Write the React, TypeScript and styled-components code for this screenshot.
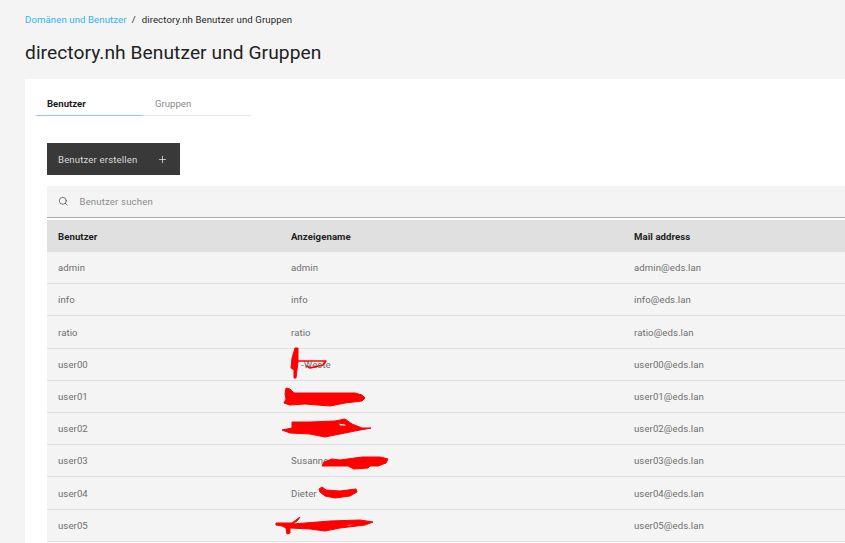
import React from 'react';
import styled, { createGlobalStyle } from 'styled-components';
import { Search, Plus } from 'lucide-react';

const GlobalStyle = createGlobalStyle`
  html, body {
    margin: 0;
    height: 100%;
    overflow: hidden;
    background: #f4f4f4;
    font-family: Roboto, "Liberation Sans", sans-serif;
  }
`;

const Page = styled.div`
  padding: 12px 0 0 25px;
  height: 543px;
  box-sizing: border-box;
  overflow: hidden;
`;

const Breadcrumb = styled.nav`
  display: flex;
  align-items: center;
  height: 14px;
  font-size: 9.6px;
  letter-spacing: 0.1px;
  color: #262626;
`;

const CrumbLink = styled.a`
  color: #2db5ee;
`;

const CrumbSep = styled.span`
  margin: 0 6px 0 5px;
`;

const Title = styled.h1`
  margin: 13px 0 13px;
  height: 27px;
  font-size: 19.2px;
  line-height: 27px;
  font-weight: 400;
  letter-spacing: 0.06px;
  color: #222;
`;

const Card = styled.main`
  background: #fff;
  padding: 11px 0 0 11px;
  height: 470px;
`;

const Tabs = styled.div`
  display: flex;
  width: 215px;
`;

const Tab = styled.div<{ $active?: boolean }>`
  box-sizing: border-box;
  width: ${(p) => (p.$active ? 107 : 108)}px;
  height: 26px;
  padding: 8px 0 0 ${(p) => (p.$active ? 11 : 12)}px;
  font-size: 9.6px;
  line-height: 12px;
  font-weight: ${(p) => (p.$active ? 700 : 400)};
  color: ${(p) => (p.$active ? '#1c1c1c' : '#8a8a8a')};
  border-bottom: 1px solid ${(p) => (p.$active ? '#8ccbea' : '#e8e8e8')};
`;

const CreateButton = styled.button`
  display: flex;
  align-items: center;
  box-sizing: border-box;
  width: 133px;
  height: 32px;
  margin: 27px 0 11px 11px;
  padding: 0 12px 0 11px;
  border: 0;
  background: #393939;
  color: #d8d8d8;
  font: 400 9.6px Roboto, sans-serif;
  letter-spacing: 0.15px;
`;

const ButtonIcon = styled(Plus)`
  margin-left: auto;
  color: #f4f4f4;
`;

const TableArea = styled.section`
  position: relative;
  margin-left: 11px;
`;

const SearchBar = styled.div`
  display: flex;
  align-items: center;
  box-sizing: border-box;
  height: 32px;
  padding-left: 11px;
  background: #f4f4f4;
  border-bottom: 1px solid #a8a8a8;
  margin-bottom: 2px;
  font-size: 9.6px;
  letter-spacing: 0.15px;
  color: #8d8d8d;
`;

const SearchIcon = styled(Search)`
  color: #393939;
  margin-right: 11px;
`;

const Row = styled.div<{ $head?: boolean }>`
  display: grid;
  grid-template-columns: 233px 343px 1fr;
  align-items: center;
  box-sizing: border-box;
  height: ${(p) => (p.$head ? '32.1px' : '32.2px')};
  padding-left: 11px;
  font-size: 9.6px;
  letter-spacing: 0.08px;
  font-weight: ${(p) => (p.$head ? 700 : 400)};
  color: ${(p) => (p.$head ? '#222' : '#6f6f6f')};
  background: ${(p) => (p.$head ? '#e0e0e0' : '#f4f4f4')};
  border-bottom: ${(p) => (p.$head ? 'none' : '1px solid #e0e0e0')};
`;

const NameCell = styled.span<{ $indent?: boolean }>`
  padding-left: ${(p) => (p.$indent ? 10 : 0)}px;
`;

const Scribble = styled.svg`
  position: absolute;
  left: 0;
  top: 0;
  overflow: visible;
  pointer-events: none;
`;

const Ink = styled.path`
  fill: #fe0000;
  fill-rule: evenodd;
  stroke: #fe0000;
  stroke-width: 1;
  stroke-linejoin: round;
`;

const InkLine = styled.path`
  fill: none;
  stroke: #fe0000;
  stroke-width: 1.6;
  stroke-linecap: round;
  stroke-linejoin: round;
`;

const users: [string, string, boolean?][] = [
  ['admin', 'admin'],
  ['info', 'info'],
  ['ratio', 'ratio'],
  ['user00', '-Weste', true],
  ['user01', ''],
  ['user02', ''],
  ['user03', 'Susanne'],
  ['user04', 'Dieter'],
  ['user05', ''],
];

// Redaction marks, in page coordinates through the viewBox
const Redactions = () => (
  <Scribble width="798" height="357" viewBox="47 186 798 357">
    <Ink d="M295 348 L298 348 L298 362 L296 378 L294 378 L294 370 L291 368 L292 358 Z" />
    <InkLine d="M297 361 L326 361 L323 365 L310 368 L307 366" />
    <Ink d="M286 388 L290 389 L294 393 L355 393 L362 395 L365 398 L362 401 L345 403 L330 406 L305 404 L290 405 L284 403 L286 399 L285 394 Z" />
    <Ink d="M292 422 L310 422 L335 421 L345 419 L352 424 L362 428 L371 428 L355 431 L335 435 L325 437 L310 434 L290 433 L282 430 L292 428 Z M338 423 L345 424 L347 426 L340 426 Z" />
    <Ink d="M324 462 L332 459 L340 460 L362 457 L380 457 L388 459 L386 463 L378 466 L370 466 L368 468 L354 469 L348 466 L332 466 L322 466 Z" />
    <Ink d="M319 489 L322 487 L326 490 L340 491 L356 489 L357 492 L350 496 L335 498 L325 496 L320 492 Z" />
    <Ink d="M276 523 L292 523 L300 517 L298 520 L293 524 L330 521 L360 520 L373 522 L365 525 L340 528 L325 531 L310 529 L290 528 L290 533 L287 534 L286 528 L282 526 L276 525 Z M340 525 L355 524 L350 526 Z" />
  </Scribble>
);

export default function App() {
  return (
    <Page>
      <GlobalStyle />
      <Breadcrumb>
        <CrumbLink>Domänen und Benutzer</CrumbLink>
        <CrumbSep>/</CrumbSep>
        <span>directory.nh Benutzer und Gruppen</span>
      </Breadcrumb>
      <Title>directory.nh Benutzer und Gruppen</Title>
      <Card>
        <Tabs>
          <Tab $active>Benutzer</Tab>
          <Tab>Gruppen</Tab>
        </Tabs>
        <CreateButton>
          Benutzer erstellen
          <ButtonIcon size={11} strokeWidth={1.5} />
        </CreateButton>
        <TableArea>
          <SearchBar>
            <SearchIcon size={10.5} strokeWidth={1.5} />
            Benutzer suchen
          </SearchBar>
          <Row $head>
            <span>Benutzer</span>
            <span>Anzeigename</span>
            <span>Mail address</span>
          </Row>
          {users.map(([user, name, indent]) => (
            <Row key={user}>
              <span>{user}</span>
              <NameCell $indent={indent}>{name}</NameCell>
              <span>{user}@eds.lan</span>
            </Row>
          ))}
          <Redactions />
        </TableArea>
      </Card>
    </Page>
  );
}
